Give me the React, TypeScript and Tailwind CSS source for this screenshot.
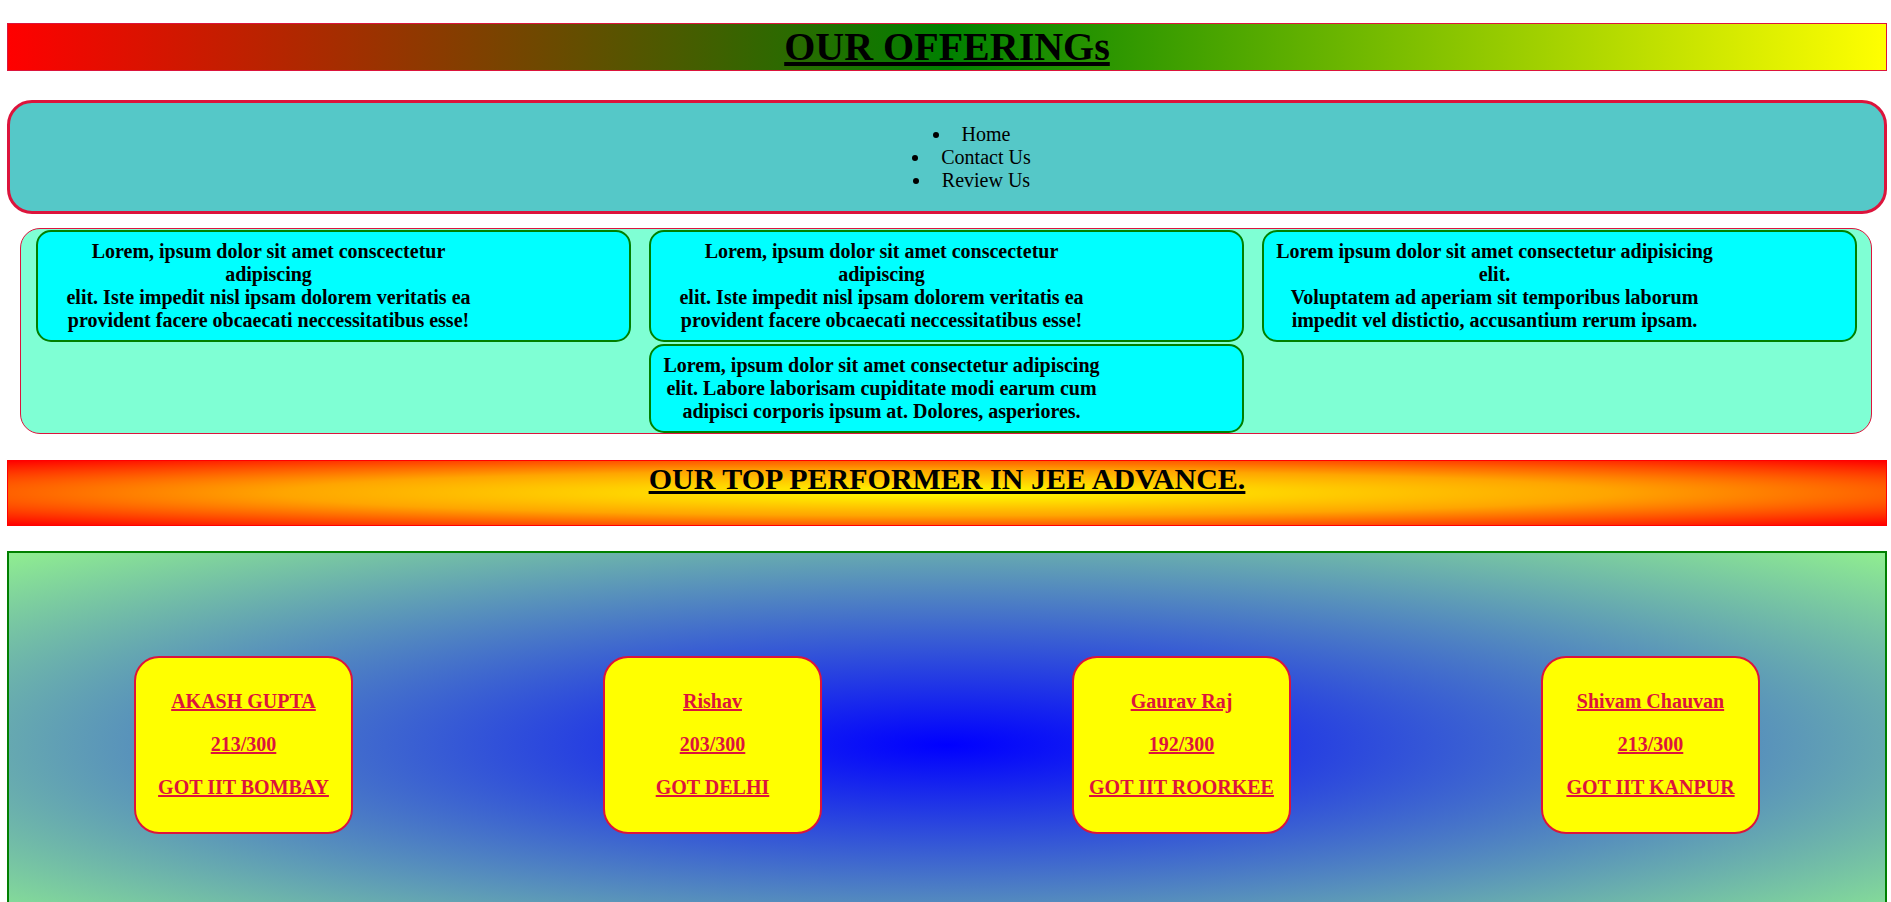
const cards = [
  {
    lines: [
      'Lorem, ipsum dolor sit amet conscectetur',
      'adipiscing',
      'elit. Iste impedit nisl ipsam dolorem veritatis ea',
      'provident facere obcaecati neccessitatibus esse!',
    ],
  },
  {
    lines: [
      'Lorem, ipsum dolor sit amet conscectetur',
      'adipiscing',
      'elit. Iste impedit nisl ipsam dolorem veritatis ea',
      'provident facere obcaecati neccessitatibus esse!',
    ],
  },
  {
    lines: [
      'Lorem ipsum dolor sit amet consectetur adipisicing',
      'elit.',
      'Voluptatem ad aperiam sit temporibus laborum',
      'impedit vel distictio, accusantium rerum ipsam.',
    ],
  },
  {
    lines: [
      'Lorem, ipsum dolor sit amet consectetur adipiscing',
      'elit. Labore laborisam cupiditate modi earum cum',
      'adipisci corporis ipsum at. Dolores, asperiores.',
    ],
  },
];

const performers = [
  { name: 'AKASH GUPTA', score: '213/300', got: 'GOT IIT BOMBAY' },
  { name: 'Rishav', score: '203/300', got: 'GOT DELHI' },
  { name: 'Gaurav Raj', score: '192/300', got: 'GOT IIT ROORKEE' },
  { name: 'Shivam Chauvan', score: '213/300', got: 'GOT IIT KANPUR' },
];

export default function App() {
  return (
    <div className="min-h-screen bg-white text-black [font-family:'Liberation_Serif','Times_New_Roman',serif] text-[20px] pl-[7px] pr-[4px] pt-[23px]">
      {/* Offerings heading */}
      <div className="border border-[crimson] bg-[linear-gradient(to_right,red,green,yellow)]">
        <h1 className="m-0 text-center text-[40px] leading-[46px] font-bold underline">
          OUR OFFERINGs
        </h1>
      </div>

      {/* Nav */}
      <nav className="mt-[29px] border-[3px] border-[crimson] rounded-[25px] bg-[#55c8c8]">
        <ul className="list-disc flex flex-col items-center pl-[68px] pt-[20px] pb-[19px] leading-[23px]">
          <li className="pl-[10px]">Home</li>
          <li className="pl-[10px]">Contact Us</li>
          <li className="pl-[10px]">Review Us</li>
        </ul>
      </nav>

      {/* Offering cards */}
      <div className="mt-[14px] ml-[13px] mr-[15px] border border-[crimson] rounded-[20px] bg-[aquamarine] pt-[1px] flex flex-wrap justify-center gap-x-[18px] gap-y-[2px]">
        {cards.map((card, i) => (
          <div
            key={i}
            className="w-[595px] border-2 border-[green] rounded-[15px] bg-[cyan]"
          >
            <p className="w-[454px] pl-[8px] py-[8px] text-center font-bold leading-[23px] whitespace-nowrap">
              {card.lines.map((line, j) => (
                <span key={j} className="block">
                  {line}
                </span>
              ))}
            </p>
          </div>
        ))}
      </div>

      {/* Top performer heading */}
      <div className="mt-[26px] border border-[red] bg-[radial-gradient(yellow,orange,red)]">
        <h2 className="m-0 pb-[29px] text-center text-[30px] leading-[35px] font-bold underline">
          OUR TOP PERFORMER IN JEE ADVANCE.
        </h2>
      </div>

      {/* Performers */}
      <section className="mt-[25px] border-2 border-[green] bg-[radial-gradient(blue,lightgreen)] py-[103px] flex justify-around items-center">
        {performers.map((p) => (
          <div
            key={p.name}
            className="w-[219px] h-[178px] pt-[12px] border-2 border-[crimson] rounded-[25px] bg-[yellow] text-center font-bold text-[crimson] underline leading-[23px]"
          >
            <p className="my-5">{p.name}</p>
            <p className="my-5">{p.score}</p>
            <p className="my-5">{p.got}</p>
          </div>
        ))}
      </section>
    </div>
  );
}
